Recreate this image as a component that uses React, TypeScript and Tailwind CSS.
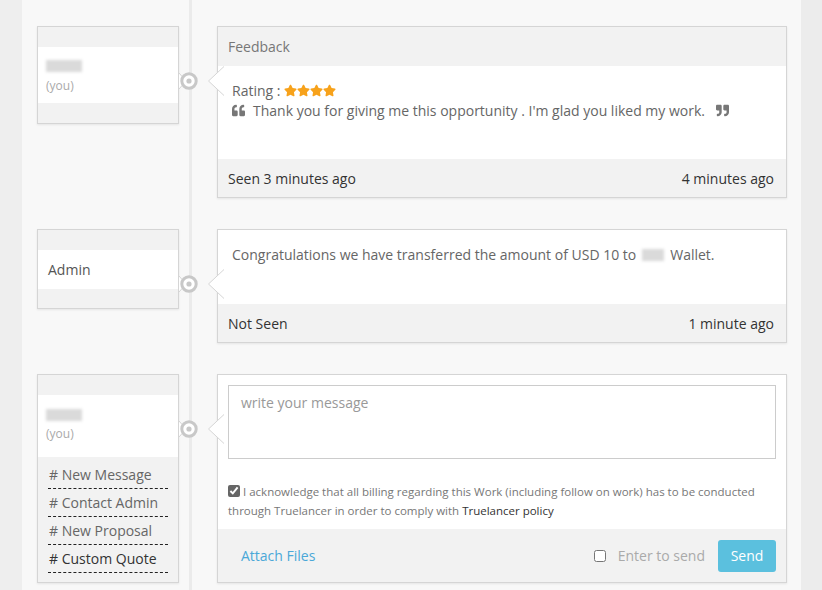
import React from "react";
import { FaQuoteLeft, FaQuoteRight, FaStar } from "react-icons/fa";

const font = { fontFamily: '"Open Sans", "Noto Sans", Arial, sans-serif' };

// ring on the timeline + the two little pointers
function Joint() {
  return (
    <>
      <svg className="absolute left-[137px] top-[40px]" width="50" height="30" viewBox="0 0 50 30">
        <polygon points="5,7 12,15 5,23" fill="#fff" />
        <line x1="5" y1="7" x2="12" y2="15" stroke="#d5d5d5" />
        <line x1="12" y1="15" x2="5" y2="23" stroke="#d5d5d5" />
        <polygon points="50,0 34.5,15 50,30" fill="#fff" />
        <line x1="50" y1="0.5" x2="34.5" y2="15" stroke="#d5d5d5" />
        <line x1="34.5" y1="15" x2="50" y2="29.5" stroke="#d5d5d5" />
      </svg>
      <svg className="absolute left-[143px] top-[46px]" width="18" height="18" viewBox="0 0 18 18">
        <circle cx="9" cy="9" r="7.2" fill="#fff" stroke="#c8c8c8" strokeWidth="3" />
        <circle cx="9" cy="9" r="2.6" fill="#c8c8c8" />
      </svg>
    </>
  );
}

function Blur({ w }: { w: number }) {
  return <div className="h-[12px] bg-[#dadada] blur-[1.5px]" style={{ width: w }} />;
}

export default function App() {
  return (
    <div className="flex h-[590px] w-full overflow-hidden text-[14px]" style={font}>
      <div className="w-[22px] flex-shrink-0 bg-[#eeeeee]" />

      <main className="relative w-[779px] flex-shrink-0 bg-[#f8f8f8] pl-[15px] pt-[26px]">
        <div className="absolute bottom-0 left-[167px] top-0 w-[3px] bg-[#ebebeb]" />

        <div className="relative flex flex-col gap-[31px]">
          {/* feedback */}
          <div className="relative flex items-start gap-[38px]">
            <div className="w-[142px] border border-[#d5d5d5] bg-[#f2f2f2] shadow-[0_1px_2px_rgba(0,0,0,0.08)]">
              <div className="h-5" />
              <div className="flex h-[56px] flex-col justify-center bg-white pl-[8px] pt-[5px]">
                <Blur w={36} />
                <div className="mt-[5px] text-[12px] text-[#aaa]">(you)</div>
              </div>
              <div className="h-5" />
            </div>
            <div className="w-[570px] border border-[#d5d5d5] bg-white shadow-[0_1px_2px_rgba(0,0,0,0.08)]">
              <div className="flex h-[39px] items-center bg-[#f2f2f2] px-[10px] text-[#777]">Feedback</div>
              <div className="h-[93px] px-[14px] pt-[14px] text-[#666]">
                <div className="flex h-[20px] items-center gap-[4px]">
                  Rating :
                  <span className="flex text-[#f7a21b]">
                    <FaStar size={13} />
                    <FaStar size={13} />
                    <FaStar size={13} />
                    <FaStar size={13} />
                  </span>
                </div>
                <div className="flex h-[20px] items-center">
                  <FaQuoteLeft size={13} className="mr-[8px] text-[#777]" />
                  Thank you for giving me this opportunity . I'm glad you liked my work.
                  <FaQuoteRight size={13} className="ml-[11px] text-[#777]" />
                </div>
              </div>
              <div className="flex h-[38px] items-center justify-between bg-[#f2f2f2] px-[10px] pr-[12px] text-[#333]">
                <span>Seen 3 minutes ago</span>
                <span>4 minutes ago</span>
              </div>
            </div>
            <Joint />
          </div>

          {/* admin transfer */}
          <div className="relative flex items-start gap-[38px]">
            <div className="w-[142px] border border-[#d5d5d5] bg-[#f2f2f2] shadow-[0_1px_2px_rgba(0,0,0,0.08)]">
              <div className="h-5" />
              <div className="flex h-[39px] items-center bg-white pl-[10px] text-[#555]">Admin</div>
              <div className="h-[19px]" />
            </div>
            <div className="w-[570px] border border-[#d5d5d5] bg-white shadow-[0_1px_2px_rgba(0,0,0,0.08)]">
              <div className="flex h-[74px] items-start px-[14px] pt-[14px] text-[#666]">
                Congratulations we have transferred the amount of USD 10 to
                <span className="mx-[6px] mt-[5px] inline-block">
                  <Blur w={22} />
                </span>
                Wallet.
              </div>
              <div className="flex h-[38px] items-center justify-between bg-[#f2f2f2] px-[10px] pr-[12px] text-[#333]">
                <span>Not Seen</span>
                <span>1 minute ago</span>
              </div>
            </div>
            <Joint />
          </div>

          {/* composer */}
          <div className="relative flex items-start gap-[38px]">
            <div className="w-[142px] border border-[#d5d5d5] bg-[#f2f2f2] shadow-[0_1px_2px_rgba(0,0,0,0.08)]">
              <div className="h-5" />
              <div className="flex h-[62px] flex-col justify-center bg-white pl-[8px]">
                <Blur w={36} />
                <div className="mt-[4px] text-[12px] text-[#aaa]">(you)</div>
              </div>
              <ul className="ml-[10px] w-[120px] pb-[9px] pt-[4px] text-[#666]">
                <li className="flex h-[28px] items-center border-b border-dashed border-[#222] pl-[1px]"># New Message</li>
                <li className="flex h-[28px] items-center border-b border-dashed border-[#222] pl-[1px]"># Contact Admin</li>
                <li className="flex h-[28px] items-center border-b border-dashed border-[#222] pl-[1px]"># New Proposal</li>
                <li className="flex h-[28px] items-center border-b border-dashed border-[#222] pl-[1px] text-[#333]"># Custom Quote</li>
              </ul>
            </div>
            <div className="w-[570px] border border-[#d5d5d5] bg-white shadow-[0_1px_2px_rgba(0,0,0,0.08)]">
              <div className="h-[154px] px-[10px] pt-[10px]">
                <textarea
                  className="block h-[74px] w-[548px] resize-none border border-[#ccc] px-[12px] py-[6px] text-[14px] text-[#555] outline-none placeholder:text-[#999]"
                  placeholder="write your message"
                  style={font}
                />
                <label className="mt-[23px] block text-[11.5px] leading-[19px] text-[#777]">
                  <input type="checkbox" defaultChecked className="mr-[3px] h-[12px] w-[12px] align-[-1px] accent-[#666]" />
                  I acknowledge that all billing regarding this Work (including follow on work) has to be conducted through Truelancer in order to comply with <span className="text-[#333]">Truelancer policy</span>
                </label>
              </div>
              <div className="flex h-[53px] items-center justify-between bg-[#f2f2f2] pl-[23px] pr-[10px]">
                <span className="text-[#4aa8d8]">Attach Files</span>
                <div className="flex items-center">
                  <input type="checkbox" className="h-[12px] w-[12px] accent-[#999]" />
                  <span className="ml-[12px] mr-[13px] text-[#aaa]">Enter to send</span>
                  <button className="h-[32px] w-[58px] rounded-[3px] bg-[#5bc0de] text-[14px] text-white">Send</button>
                </div>
              </div>
            </div>
            <Joint />
          </div>
        </div>
      </main>

      <div className="flex-1 bg-[#ececec]" />
    </div>
  );
}
